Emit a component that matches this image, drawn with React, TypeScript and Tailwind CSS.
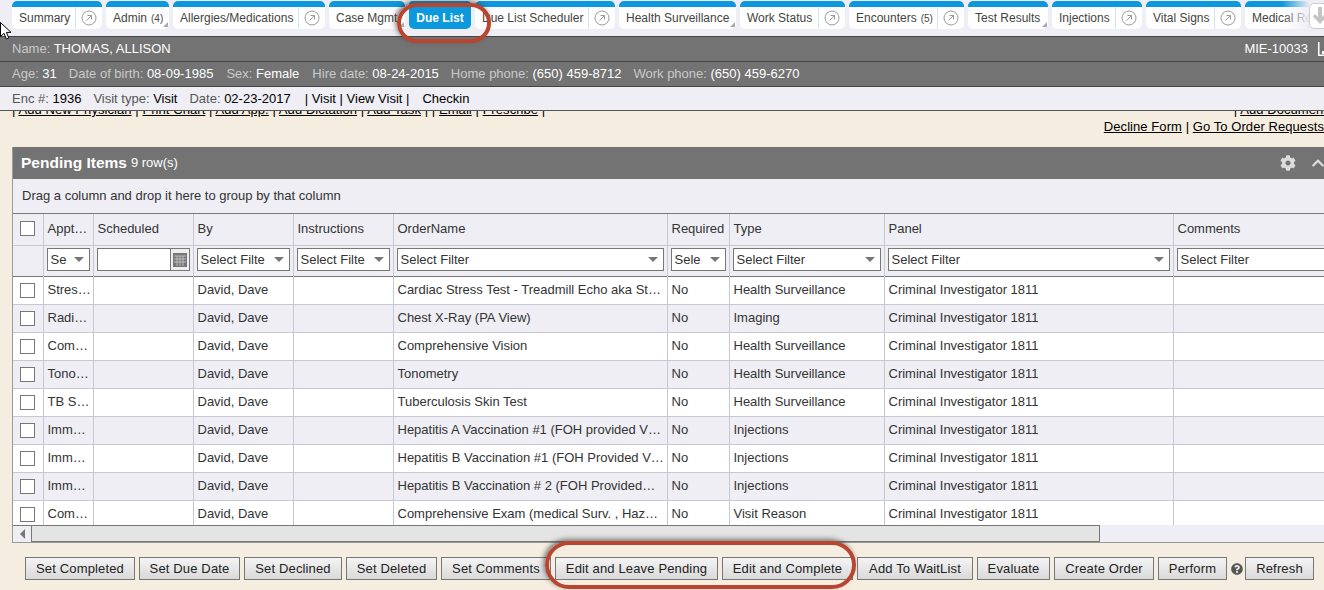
import { FaCog, FaChevronUp, FaQuestionCircle } from "react-icons/fa";

const tabs = [
  { label: "Summary", w: "w-[90px]", go: true },
  { label: "Admin", count: "(4)", w: "w-[63px]", menu: true },
  { label: "Allergies/Medications", w: "w-[152px]", go: true },
  { label: "Case Mgmt", w: "w-[76px]", menu: true },
  { label: "Due List", w: "w-[62px]", active: true },
  { label: "Due List Scheduler", w: "w-[140px]", go: true },
  { label: "Health Surveillance", w: "w-[117px]", menu: true },
  { label: "Work Status", w: "w-[105px]", go: true },
  { label: "Encounters", count: "(5)", w: "w-[115px]", go: true },
  { label: "Test Results", w: "w-[80px]", menu: true },
  { label: "Injections", w: "w-[90px]", go: true },
  { label: "Vital Signs", w: "w-[95px]", go: true },
  { label: "Medical Records", w: "w-[65px]" },
];

const rows = [
  ["Stres…", "David, Dave", "Cardiac Stress Test - Treadmill Echo aka St…", "Health Surveillance"],
  ["Radi…", "David, Dave", "Chest X-Ray (PA View)", "Imaging"],
  ["Com…", "David, Dave", "Comprehensive Vision", "Health Surveillance"],
  ["Tono…", "David, Dave", "Tonometry", "Health Surveillance"],
  ["TB S…", "David, Dave", "Tuberculosis Skin Test", "Health Surveillance"],
  ["Imm…", "David, Dave", "Hepatitis A Vaccination #1 (FOH provided V…", "Injections"],
  ["Imm…", "David, Dave", "Hepatitis B Vaccination #1 (FOH Provided V…", "Injections"],
  ["Imm…", "David, Dave", "Hepatitis B Vaccination # 2 (FOH Provided…", "Injections"],
  ["Com…", "David, Dave", "Comprehensive Exam (medical Surv. , Haz…", "Visit Reason"],
];

const buttons = [
  ["Set Completed", "w-[110px]"],
  ["Set Due Date", "w-[101px]"],
  ["Set Declined", "w-[98px]"],
  ["Set Deleted", "w-[91px]"],
  ["Set Comments", "w-[110px]"],
  ["Edit and Leave Pending", "w-[163px]"],
  ["Edit and Complete", "w-[131px]"],
  ["Add To WaitList", "w-[116px]"],
  ["Evaluate", "w-[73px]"],
  ["Create Order", "w-[100px]"],
  ["Perform", "w-[69px]"],
];

function GoIcon() {
  return (
    <svg viewBox="0 0 16 16" className="w-4 h-4 text-[#9a9a9a]" fill="none" stroke="currentColor">
      <circle cx="8" cy="8" r="7" />
      <path d="M5.5 10.5 10.5 5.5M6.5 5.5h4v4" />
    </svg>
  );
}

function Tab({ tab }: { tab: (typeof tabs)[number] }) {
  if (tab.active) {
    return (
      <div className={`${tab.w} h-[28px] shrink-0 rounded-t-[4px] rounded-b-[5px] bg-[#0c98dc] pt-[6px]`}>
        <div className="h-[22px] flex items-center justify-center rounded-[5px] text-[12px] font-bold text-white">{tab.label}</div>
      </div>
    );
  }
  return (
    <div className={`${tab.w} h-[28px] shrink-0 rounded-[5px] bg-white overflow-hidden relative flex flex-col`}>
      <div className="h-[6px] bg-[#0c98dc] shrink-0" />
      <div className="flex-1 flex items-center text-[12px] text-[#444] whitespace-nowrap">
        <span className="flex-1 pl-[7px] overflow-hidden">
          {tab.label}
          {tab.count && <span className="text-[10px] ml-1">{tab.count}</span>}
        </span>
        {tab.go && (
          <span className="w-[27px] h-full shrink-0 border-l border-[#cfe6f2] flex items-center justify-center">
            <GoIcon />
          </span>
        )}
      </div>
      {tab.menu && (
        <span className="absolute right-[1px] bottom-[2px] w-0 h-0 border-l-[5px] border-l-transparent border-b-[5px] border-b-[#aaa]" />
      )}
    </div>
  );
}

function Select({ text, caret = true }: { text: string; caret?: boolean }) {
  return (
    <div className="h-[23px] border border-[#777] bg-white flex items-center justify-between pl-[3px] pr-[5px] text-[13px] text-[#333] whitespace-nowrap overflow-hidden">
      <span>{text}</span>
      {caret && <span className="w-0 h-0 ml-1 shrink-0 border-x-[5px] border-x-transparent border-t-[5px] border-t-[#777]" />}
    </div>
  );
}

function Checkbox() {
  return <div className="w-[15px] h-[15px] border border-[#777] bg-white mx-auto" />;
}

const filter = "border-r border-[#c8c8d2] text-left font-normal px-[3px] pb-[2px]";
const head = "border-r border-[#c8c8d2] text-left font-normal pl-[4px] pr-[2px] pb-[2px]";
const cell = "border-r border-[#c8c8d2] pl-[4px] pr-[2px] whitespace-nowrap overflow-hidden";
const check = "border-r border-[#c8c8d2] px-[3px]";

export default function App() {
  return (
    <div className="relative w-[1324px] h-[590px] overflow-hidden bg-[#f5eddf] text-[#333] font-['Liberation_Sans',Arial,sans-serif]">
      {/* tab strip */}
      <div className="h-[36px] bg-[#eeeef4] pt-[1px] pl-3 flex gap-1 relative overflow-hidden">
        {tabs.map((t) => (
          <Tab key={t.label} tab={t} />
        ))}
        <div className="absolute left-[1282px] top-0 w-[28px] h-[30px] bg-linear-to-r from-transparent to-[#eeeef4]" />
        <div className="absolute left-[1309px] top-[3px] w-[30px] h-[26px] rounded-[5px] border border-[#ccc] bg-white flex items-center pl-[3px]">
          <svg viewBox="0 0 14 18" className="w-[14px] h-[18px] text-[#c4c4c4]" fill="currentColor">
            <path d="M5 0h4v10l3-3 2 2.5L7 17 0 9.5 2 7l3 3z" />
          </svg>
        </div>
      </div>

      {/* patient bars */}
      <div className="h-[25px] bg-[#737373] border-t border-[#444] flex items-center justify-between pl-3 text-[13px] text-white">
        <div>
          <span className="text-[#c9c9c9]">Name: </span>THOMAS, ALLISON
        </div>
        <div className="flex items-center">
          MIE-10033
          <svg viewBox="0 0 12 14" className="w-[12px] h-[14px] ml-[10px] mr-[-6px] text-white" fill="currentColor">
            <path d="M0 0h1.5v12.5H12V14H0zM4 9h2v3H4zM8 5h2v7H8z" />
          </svg>
        </div>
      </div>
      <div className="h-[26px] bg-[#737373] border-t border-[#444] border-b flex items-center pl-3 gap-3 text-[13px] text-white whitespace-nowrap">
        <span><span className="text-[#c9c9c9]">Age: </span>31</span>
        <span><span className="text-[#c9c9c9]">Date of birth: </span>08-09-1985</span>
        <span className="ml-px"><span className="text-[#c9c9c9]">Sex: </span>Female</span>
        <span className="ml-px"><span className="text-[#c9c9c9]">Hire date: </span>08-24-2015</span>
        <span><span className="text-[#c9c9c9]">Home phone: </span>(650) 459-8712</span>
        <span><span className="text-[#c9c9c9]">Work phone: </span>(650) 459-6270</span>
      </div>
      <div className="relative z-10 h-[24px] bg-[#eeeef4] border-b border-[#555] flex items-center pl-3 gap-3 text-[13px] text-black whitespace-nowrap">
        <span><span className="text-[#555]">Enc #: </span>1936</span>
        <span><span className="text-[#555]">Visit type: </span>Visit</span>
        <span><span className="text-[#555]">Date: </span>02-23-2017</span>
        <span className="ml-[2px]">| Visit | View Visit |</span>
        <span className="ml-px">Checkin</span>
      </div>

      {/* action links, partly hidden under the encounter bar */}
      <div className="h-[36px] -mt-[9px] text-[13px] text-black leading-[15px] pl-3 tracking-[0.07px] relative">
        <div className="flex justify-between whitespace-nowrap">
          <span>
            | <u>Add New Physician</u> | <u>Print Chart</u> | <u>Add App.</u> | <u>Add Dictation</u> | <u>Add Task</u> | | <u>Email</u> | <u>Prescribe</u> |
          </span>
          <span className="mr-[-3px]">
            | <u>Add Document</u>
          </span>
        </div>
        <div className="text-right mt-[2px] whitespace-nowrap">
          <u>Decline Form</u> | <u>Go To Order Requests</u>
        </div>
      </div>

      {/* grid panel */}
      <div className="ml-3 mt-[9px] w-[1400px] h-[396px] border border-[#999] border-t-0 bg-[#eeeef4]">
        <div className="h-[32px] bg-[#737373] flex items-center pl-2 text-white w-[1311px] relative">
          <span className="text-[15.5px] font-bold">Pending Items</span>
          <span className="text-[13px] ml-1">9 row(s)</span>
          <FaCog className="absolute left-[1267px] top-[8px] w-4 h-4 text-[#dcdcdc]" />
          <FaChevronUp className="absolute left-[1298px] top-[9px] w-[14px] h-[14px] text-[#dcdcdc]" />
        </div>
        <div className="h-[35px] flex items-center pl-[9px] text-[13px] text-[#333] border-b border-[#777]">
          Drag a column and drop it here to group by that column
        </div>
        <div className="h-[311px] overflow-hidden">
          <table className="table-fixed border-collapse w-[1360px] text-[13px] text-[#333]">
            <colgroup>
              <col className="w-[30px]" />
              <col className="w-[50px]" />
              <col className="w-[100px]" />
              <col className="w-[100px]" />
              <col className="w-[100px]" />
              <col className="w-[274px]" />
              <col className="w-[62px]" />
              <col className="w-[155px]" />
              <col className="w-[289px]" />
              <col className="w-[200px]" />
            </colgroup>
            <thead>
              <tr className="h-[31px] border-b border-[#c8c8d2]">
                <th className={filter}><Checkbox /></th>
                <th className={head}>Appt…</th>
                <th className={head}>Scheduled</th>
                <th className={head}>By</th>
                <th className={head}>Instructions</th>
                <th className={head}>OrderName</th>
                <th className={head}>Required</th>
                <th className={head}>Type</th>
                <th className={head}>Panel</th>
                <th className={head}>Comments</th>
              </tr>
              <tr className="h-[31px] border-b border-[#777]">
                <th className={filter} />
                <th className={filter}><Select text="Se" /></th>
                <th className={filter}>
                  <div className="h-[23px] border border-[#777] bg-white flex justify-end">
                    <div className="w-[19px] border-l border-[#777] flex items-center justify-center bg-[#eee]">
                      <svg viewBox="0 0 14 14" className="w-[14px] h-[14px]">
                        <path d="M0 0h14v14H0z" fill="#777" />
                        <path d="M1 3h12M1 6h12M1 9h12M4 3v10M7 3v10M10 3v10" stroke="#ccc" strokeWidth=".8" />
                      </svg>
                    </div>
                  </div>
                </th>
                <th className={filter}><Select text="Select Filte" /></th>
                <th className={filter}><Select text="Select Filte" /></th>
                <th className={filter}><Select text="Select Filter" /></th>
                <th className={filter}><Select text="Sele" /></th>
                <th className={filter}><Select text="Select Filter" /></th>
                <th className={filter}><Select text="Select Filter" /></th>
                <th className={filter}><Select text="Select Filter" caret={false} /></th>
              </tr>
            </thead>
            <tbody>
              {rows.map((r, i) => (
                <tr key={i} className={`h-[28px] border-b border-[#c8c8d2] ${i % 2 ? "bg-[#eeeef4]" : "bg-white"}`}>
                  <td className={check}><Checkbox /></td>
                  <td className={cell}>{r[0]}</td>
                  <td className={cell} />
                  <td className={cell}>{r[1]}</td>
                  <td className={cell} />
                  <td className={cell}>{r[2]}</td>
                  <td className={cell}>No</td>
                  <td className={cell}>{r[3]}</td>
                  <td className={cell}>Criminal Investigator 1811</td>
                  <td className={cell} />
                </tr>
              ))}
            </tbody>
          </table>
        </div>
        <div className="h-[17px] flex">
          <div className="w-[18px] border-t border-[#777] bg-[#eeeef4] flex items-center justify-center">
            <span className="w-0 h-0 border-y-[5px] border-y-transparent border-r-[5px] border-r-[#777]" />
          </div>
          <div className="w-[1069px] border border-[#777] bg-[#e4e4e4]" />
        </div>
      </div>

      {/* footer buttons */}
      <div className="flex items-center gap-1 pl-[25px] mt-[14px]">
        {buttons.map(([label, w]) => (
          <button key={label} className={`${w} h-[23px] shrink-0 border border-[#777] bg-linear-to-b from-[#f4f4f4] to-[#d9d9d9] text-[13px] tracking-[0.15px] text-[#222] whitespace-nowrap`}>
            {label}
          </button>
        ))}
        <FaQuestionCircle className="w-3 h-3 shrink-0 -mr-[2px] text-[#555]" />
        <button className="w-[69px] h-[23px] shrink-0 border border-[#777] bg-linear-to-b from-[#f4f4f4] to-[#d9d9d9] text-[13px] tracking-[0.15px] text-[#222]">Refresh</button>
      </div>

      {/* red annotation outlines drawn on top of the screenshot */}
      <div className="absolute left-[397px] top-[3px] w-[94px] h-[40px] rounded-[20px] border-[4px] border-[#b8452f] shadow-[-2px_-2px_5px_rgba(50,50,50,0.6)]" />
      <div className="absolute left-[545px] top-[541px] w-[311px] h-[48px] rounded-[24px] border-[4px] border-[#b8452f] shadow-[-2px_-2px_5px_rgba(50,50,50,0.6)]" />

      {/* mouse pointer */}
      <svg viewBox="0 0 11 19" className="absolute left-0 top-[22px] w-[11px] h-[19px]">
        <path d="M.5.5v14l3.5-3.2 2.4 5.6 2.4-1-2.4-5.5h4.6z" fill="#fff" stroke="#000" />
      </svg>
    </div>
  );
}
